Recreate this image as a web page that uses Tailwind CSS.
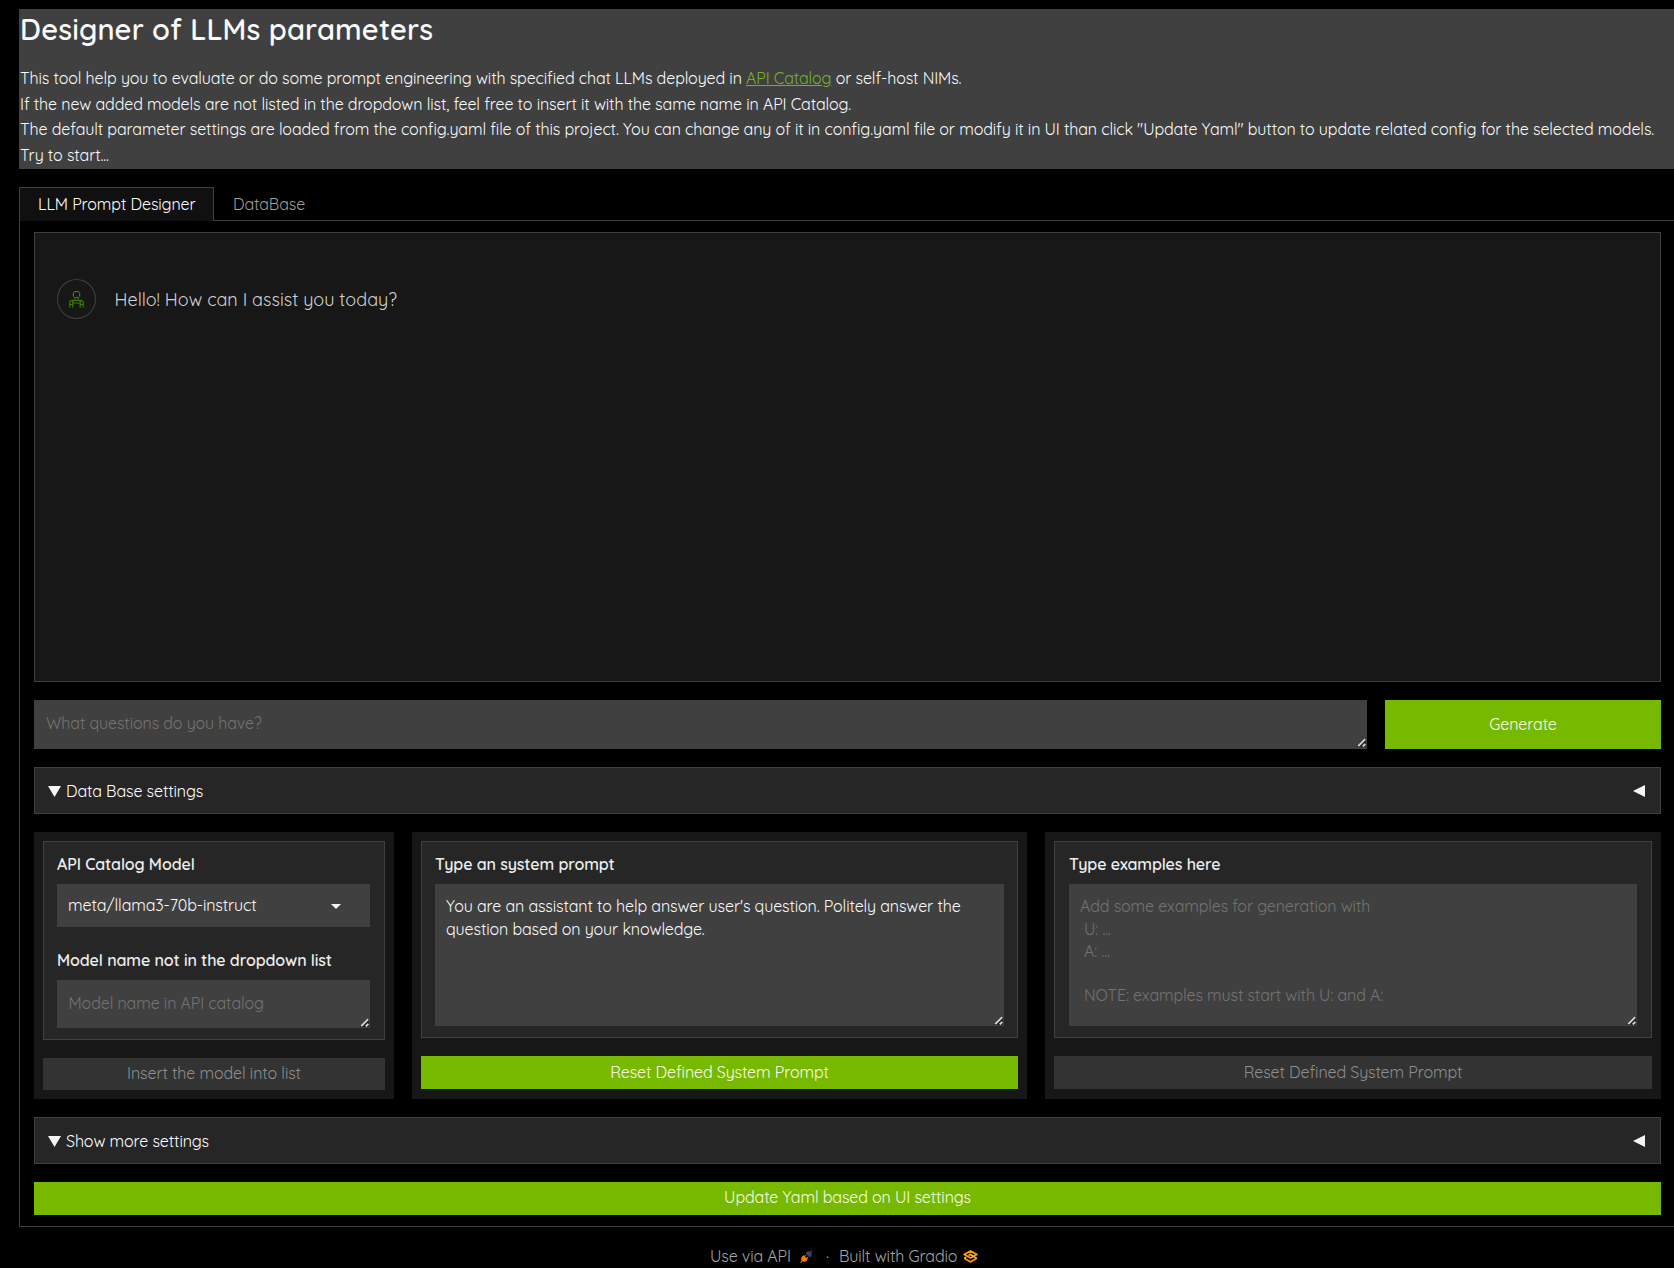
<!DOCTYPE html>
<html lang="en">
<head>
<meta charset="utf-8">
<title>Designer of LLMs parameters</title>
<script src="https://cdn.jsdelivr.net/npm/@tailwindcss/browser@4"></script>
</head>
<body class="w-[1674px] h-[1268px] overflow-hidden bg-black text-[16px] leading-[24px] tracking-[-0.115px] text-[#fafafa] font-['Quicksand','Lato',sans-serif] whitespace-nowrap">
<svg class="hidden">
  <symbol id="grip" viewBox="0 0 10 9"><path d="M.5 8.500 8.500 .5H10V9H.5z" fill="#222"/><path d="M2.200 8.200 9.200 1.200M6.800 8.400 9.400 5.800" stroke="#d6d6d6" stroke-width="1.900"/></symbol>
</svg>
<main class="pl-[19px] pt-[9px]">
  <header class="h-[160px] bg-[#404040] pl-px">
    <h1 class="text-[29px] leading-[40px] font-semibold tracking-[0.13px] text-[#fafafa]">Designer of LLMs parameters</h1>
    <div class="pt-[17px] leading-[25.6px]">
      <p>This tool help you to evaluate or do some prompt engineering with specified chat LLMs deployed in <a class="text-[#76b028] underline">API Catalog</a> or self-host NIMs.</p>
      <p>If the new added models are not listed in the dropdown list, feel free to insert it with the same name in API Catalog.</p>
      <p>The default parameter settings are loaded from the config.yaml file of this project. You can change any of it in config.yaml file or modify it in UI than click "Update Yaml" button to update related config for the selected models.</p>
      <p>Try to start...</p>
    </div>
  </header>

  <nav class="mt-[18px] h-[34px] flex leading-[32px]">
    <div class="w-[195px] border border-b-0 border-[#404040] bg-[#101010] pl-[18px] text-white">LLM Prompt Designer</div>
    <div class="flex-1 border-b border-[#404040] pl-[19px] pt-px text-[#9d9d9d]">DataBase</div>
  </nav>

  <section class="border-l border-b border-[#404040] pl-[14px] pr-[13px] pt-[11px] pb-[11px] flex flex-col gap-[18px]">
    <div class="h-[450px] border border-[#404040] bg-[#171717] pl-[22px] pt-[46px]">
      <div class="flex items-center gap-[18.5px]">
        <div class="w-[39px] h-[40px] rounded-[50%] border border-[#404040] flex items-center justify-center">
          <svg class="w-[15px] h-[17px]" viewBox="0 0 15 17" fill="none" stroke="#437a08" stroke-width="1.200"><path d="M5 .6H10M4.400 1.200V5.800M10.600 1.200V5.800M5 6.500H10M6 7v1.500M9 7v1.500M4.500 9.500H10.500M4.500 9.200 1 10M10.500 9.200 14 10M.8 10V16.500M14.200 10V16.500M3.800 10V16.500M11.200 10V16.500M.8 13.500H3.800M11.200 13.500H14.200M4.500 12H10.500"/></svg>
        </div>
        <p class="pt-[2px] text-[18px] tracking-normal text-[#d0d0d0]">Hello! How can I assist you today?</p>
      </div>
    </div>

    <div class="flex gap-[18px] h-[49px]">
      <div class="relative w-[1333px] bg-[#404040] pl-[12px] pt-[11px] text-[#737373]">What questions do you have?
        <svg class="absolute right-[1px] bottom-[2px] w-[10px] h-[9px]"><use href="#grip"/></svg></div>
      <div class="flex-1 bg-[#76b900] text-center leading-[49px] text-[#f8fde8]">Generate</div>
    </div>

    <div class="h-[47px] border border-[#404040] bg-[#262626] flex items-center justify-between pl-[13px] pr-[15px] text-white">
      <div class="flex items-center gap-[5px]"><svg class="w-[13px] h-[11px] mt-[2px]" viewBox="0 0 13 11"><path d="M0 0H13L6.500 11z" fill="#f4f4f4"/></svg><span class="pt-px">Data Base settings</span></div>
      <svg class="w-[12px] h-[12px]" viewBox="0 0 12 12"><path d="M12 0V12L0 6z" fill="#f4f4f4"/></svg>
    </div>

    <div class="flex gap-[18px] h-[267px]">
      <div class="w-[360px] bg-[#171717] p-[9px] flex flex-col gap-[18px]">
        <div class="h-[199px] border border-[#404040] bg-[#262626] pl-[13px] pr-[14px] pt-[10px]">
          <p class="font-semibold text-[#ececec]">API Catalog Model</p>
          <div class="mt-2 h-[43px] bg-[#404040] pl-[11px] pr-[29px] flex items-center justify-between"><span class="pb-px">meta/llama3-70b-instruct</span>
            <svg class="w-[10px] h-[5px] mt-px" viewBox="0 0 10 5"><path d="M0 0H10L5 5z" fill="#f4f4f4"/></svg></div>
          <p class="mt-[21px] font-semibold text-[#ececec]">Model name not in the dropdown list</p>
          <div class="relative mt-2 h-[48px] bg-[#404040] pl-[11.5px] pt-[11px] text-[#737373]">Model name in API catalog
            <svg class="absolute right-px bottom-px w-[10px] h-[9px]"><use href="#grip"/></svg></div>
        </div>
        <div class="h-[32px] bg-[#333333] text-center leading-[31px] text-[#8e8e8e]">Insert the model into list</div>
      </div>

      <div class="w-[615px] bg-[#171717] p-[9px] flex flex-col gap-[18px]">
        <div class="h-[197px] border border-[#404040] bg-[#262626] px-[13px] pt-[10px]">
          <p class="font-semibold text-[#ececec]">Type an system prompt</p>
          <div class="relative mt-2 h-[142px] bg-[#404040] pl-[11px] pt-[11px] leading-[22.4px]">
            <p>You are an assistant to help answer user's question. Politely answer the</p>
            <p class="mt-px">question based on your knowledge.</p>
            <svg class="absolute right-px bottom-px w-[10px] h-[9px]"><use href="#grip"/></svg>
          </div>
        </div>
        <div class="h-[33px] bg-[#76b900] text-center leading-[33px] text-[#f8fde8]">Reset Defined System Prompt</div>
      </div>

      <div class="w-[616px] bg-[#171717] p-[9px] flex flex-col gap-[18px]">
        <div class="h-[197px] border border-[#404040] bg-[#262626] px-[14px] pt-[10px]">
          <p class="font-semibold text-[#ececec]">Type examples here</p>
          <div class="relative mt-2 h-[142px] bg-[#404040] pl-[11px] pt-[11px] leading-[22px] text-[#737373]">
            <p>Add some examples for generation with</p>
            <p class="mt-px pl-1">U: ...</p>
            <p class="pl-1">A: ...</p>
            <p class="pl-1 pt-[22px]">NOTE: examples must start with U: and A:</p>
            <svg class="absolute right-px bottom-px w-[10px] h-[9px]"><use href="#grip"/></svg>
          </div>
        </div>
        <div class="h-[33px] bg-[#333333] text-center leading-[33px] text-[#8e8e8e]">Reset Defined System Prompt</div>
      </div>
    </div>

    <div class="h-[47px] border border-[#404040] bg-[#262626] flex items-center justify-between pl-[13px] pr-[15px] text-white">
      <div class="flex items-center gap-[5px]"><svg class="w-[13px] h-[11px] mt-[2px]" viewBox="0 0 13 11"><path d="M0 0H13L6.500 11z" fill="#f4f4f4"/></svg><span class="pt-px">Show more settings</span></div>
      <svg class="w-[12px] h-[12px]" viewBox="0 0 12 12"><path d="M12 0V12L0 6z" fill="#f4f4f4"/></svg>
    </div>

    <div class="h-[33px] bg-[#76b900] text-center leading-[31px] text-[#f8fde8]">Update Yaml based on UI settings</div>
  </section>

  <footer class="pt-[17px] pl-[691px] flex items-center text-[#a3a3a3]">
    <span class="w-[80px]">Use via API</span>
    <svg class="ml-[10px] w-[13px] h-[13px]" viewBox="0 0 28 28"><path fill="#3c4555" d="M26.9425 2.94265C27.4632 2.42195 27.4632 1.57773 26.9425 1.05703C26.4218 0.536329 25.5776 0.536329 25.0569 1.05703L22.5713 3.54256C21.1213 2.59333 19.5367 2.43378 18.1753 2.64006C16.5495 2.88638 15.1127 3.66838 14.3905 4.39053L12.3905 6.39053C12.1405 6.64058 12 6.97972 12 7.33334C12 7.68697 12.1405 8.0261 12.3905 8.27615L19.7239 15.6095C20.2446 16.1302 21.0888 16.1302 21.6095 15.6095L23.6095 13.6095C24.3316 12.8873 25.1136 11.4505 25.36 9.82475C25.5663 8.46312 25.4066 6.87827 24.4571 5.42807L26.9425 2.94265Z"/><path fill="#ff7c00" d="M12.276 12.9426C12.7967 12.4219 12.7967 11.5777 12.276 11.057C11.7553 10.5363 10.9111 10.5363 10.3904 11.057L8.66651 12.7809L8.27615 12.3905C8.0261 12.1405 7.68697 12 7.33334 12C6.97972 12 6.64058 12.1405 6.39053 12.3905L4.39053 14.3905C3.66838 15.1127 2.88638 16.5495 2.64006 18.1753C2.43377 19.5367 2.59333 21.1214 3.54262 22.5714L1.05703 25.057C0.536329 25.5777 0.536329 26.4219 1.05703 26.9426C1.57773 27.4633 2.42195 27.4633 2.94265 26.9426L5.42817 24.4571C6.87835 25.4066 8.46315 25.5663 9.82475 25.36C11.4505 25.1136 12.8873 24.3316 13.6095 23.6095L15.6095 21.6095C16.1302 21.0888 16.1302 20.2446 15.6095 19.7239L15.2188 19.3332L16.9426 17.6093C17.4633 17.0886 17.4633 16.2444 16.9426 15.7237C16.4219 15.203 15.5777 15.203 15.057 15.7237L13.3332 17.4475L10.5521 14.6665L12.276 12.9426Z"/></svg>
    <span class="ml-[13px] w-[13px]">·</span>
    <span class="w-[118px]">Built with Gradio</span>
    <svg class="ml-[6px] w-[15px] h-[13px]" viewBox="0 0 15 13" fill="none" stroke-linejoin="round"><path d="M7.500 1 13.800 4.500 7.500 8 1.200 4.500z" stroke="#ff9d00" stroke-width="1.900"/><path d="M1.200 8.300 7.500 11.900 13.800 8.300" stroke="#f98a00" stroke-width="1.900"/><path d="M1.200 8.300 3.200 7.200M5.500 5.500 7.500 4.500 13.800 8.300" stroke="#ffb52e" stroke-width="1.500"/></svg>
  </footer>
</main>
</body>
</html>
